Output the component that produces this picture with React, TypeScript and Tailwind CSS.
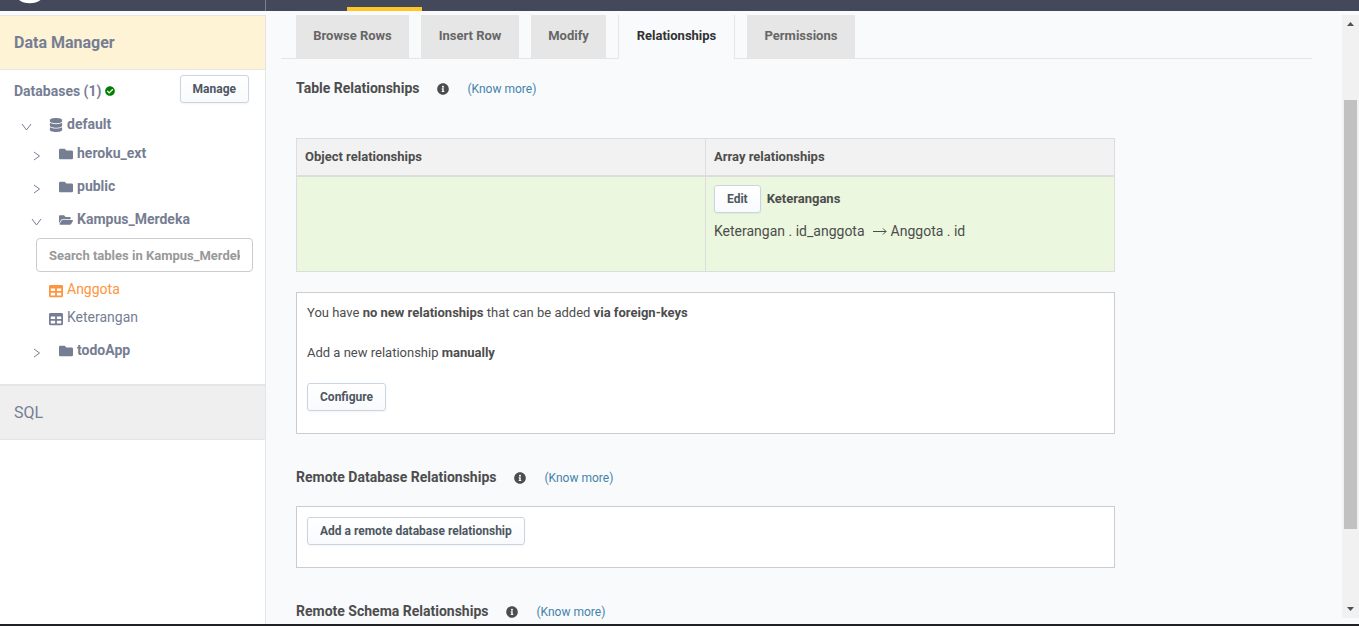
import type { ReactNode } from "react";
import {
  FaCheckCircle,
  FaDatabase,
  FaFolder,
  FaFolderOpen,
  FaInfoCircle,
  FaTable,
} from "react-icons/fa";

function ActionButton({ children }: { children: ReactNode }) {
  return (
    <button
      type="button"
      className="h-7 rounded-[3px] border border-[#cbd5e1] bg-linear-to-b from-white to-[#f8fafc] px-3 text-xs leading-5 font-bold text-[#4d5761] shadow-xs"
    >
      {children}
    </button>
  );
}

function Chevron({ open = false }: { open?: boolean }) {
  return (
    <svg
      viewBox="0 0 12 12"
      className="mt-1.5 size-3 shrink-0"
      fill="none"
      stroke="#767e93"
      strokeWidth="1"
      aria-hidden="true"
    >
      <path d={open ? "M1 3 5.500 9 10 3" : "M3 2 8.500 6 3 10"} />
    </svg>
  );
}

function Schema({ name, open = false }: { name: string; open?: boolean }) {
  const Icon = open ? FaFolderOpen : FaFolder;
  return (
    <button
      type="button"
      aria-expanded={open}
      className="flex h-[33px] w-full items-center pl-[31px] font-bold"
    >
      <Chevron open={open} />
      <Icon className="mt-0.5 mr-1 ml-4 size-3.5" />
      {name}
    </button>
  );
}

function TableLink({ name, active = false }: { name: string; active?: boolean }) {
  return (
    <a
      href="#"
      className={
        active
          ? "flex h-7 items-center pl-[49px] text-[#fd9540]"
          : "flex h-7 items-center pl-[49px]"
      }
    >
      <FaTable className="mt-1 mr-1 size-3.5" />
      {name}
    </a>
  );
}

function Sidebar() {
  return (
    <aside className="flex w-[266px] shrink-0 flex-col border-r border-[#e5e5e5] bg-white text-sm text-[#767e93]">
      <h2 className="flex h-[55px] shrink-0 items-center border-y border-[#e5e5e5] bg-[#fff3d5] px-3.5 text-base font-bold">
        Data Manager
      </h2>
      <div className="flex h-[42px] items-center justify-between pr-4 pl-3.5">
        <h3 className="flex items-center gap-1 text-sm font-bold">
          Databases (1) <FaCheckCircle className="size-2.5 text-[#008000]" />
        </h3>
        <div className="pb-1">
          <ActionButton>Manage</ActionButton>
        </div>
      </div>
      <button
        type="button"
        aria-expanded="true"
        className="flex h-6 items-center pl-[21px] font-bold"
      >
        <Chevron open />
        <FaDatabase className="mt-0.5 mr-1 ml-4 size-3.5" />
        default
      </button>
      <Schema name="heroku_ext" />
      <Schema name="public" />
      <Schema name="Kampus_Merdeka" open />
      <input
        type="text"
        aria-label="Search tables in Kampus_Merdeka"
        placeholder="Search tables in Kampus_Merdeka..."
        className="mt-[3px] mr-3 mb-[3px] ml-9 h-[34px] rounded border border-[#cccccc] px-3 text-[13px] font-bold placeholder:text-[#999999]"
      />
      <div className="pb-0.5">
        <TableLink name="Anggota" active />
        <TableLink name="Keterangan" />
      </div>
      <Schema name="todoApp" />
      <a
        href="#"
        className="mt-[18px] flex h-14 shrink-0 items-center border-t-2 border-b border-[#e5e5e5] bg-[#efefef] px-3.5 text-base"
      >
        SQL
      </a>
    </aside>
  );
}

const inactiveTab =
  "flex h-11 items-center justify-center border-b border-[#e5e5e5] bg-[#e6e6e6] pb-0.5 text-[#666666]";

function Tabs() {
  return (
    <nav className="flex h-11 shrink-0 gap-3 pl-[15px] text-[13px] font-bold shadow-[inset_0_-1px_0_#e5e5e5]">
      <a href="#" className={`${inactiveTab} w-[113px]`}>
        Browse Rows
      </a>
      <a href="#" className={`${inactiveTab} w-[98px]`}>
        Insert Row
      </a>
      <a href="#" className={`${inactiveTab} w-[75px]`}>
        Modify
      </a>
      <a
        href="#"
        aria-current="page"
        className="flex h-11 w-[117px] items-center justify-center border-x border-[#e5e5e5] bg-[#f8fafc] pb-0.5 text-[#333333]"
      >
        Relationships
      </a>
      <a href="#" className={`${inactiveTab} w-[108px]`}>
        Permissions
      </a>
    </nav>
  );
}

function SectionHeading({ title }: { title: string }) {
  return (
    <div className="flex h-6 items-center">
      <h3 className="text-sm font-bold">{title}</h3>
      <FaInfoCircle className="mt-0.5 mr-[18px] ml-[18px] size-3" />
      <a href="#" className="mt-0.5 text-xs text-[#4483ad]">
        (Know more)
      </a>
    </div>
  );
}

function RelationshipTable() {
  return (
    <table className="w-full table-fixed border-collapse border border-[#dddddd] text-left">
      <thead>
        <tr className="h-[37px] border-b-2 border-[#dddddd] bg-[#f2f2f2] text-[13px]">
          <th className="border-r border-[#dddddd] px-2 font-bold">Object relationships</th>
          <th className="px-2 font-bold">Array relationships</th>
        </tr>
      </thead>
      <tbody>
        <tr className="h-24 bg-[#ebf7de] align-top">
          <td className="border-r border-[#dddddd]" />
          <td className="p-2">
            <div className="flex items-center gap-1.5 text-[13px] font-bold">
              <ActionButton>Edit</ActionButton>
              Keterangans
            </div>
            <div className="mt-2 flex items-center text-sm">
              Keterangan . id_anggota
              <svg
                viewBox="0 0 14 8"
                className="mr-1 ml-2 h-2 w-3.5"
                fill="none"
                stroke="currentColor"
                aria-hidden="true"
              >
                <path d="M0 4.500h13M10 1.500l3 3-3 3" />
              </svg>
              Anggota . id
            </div>
          </td>
        </tr>
      </tbody>
    </table>
  );
}

function Scrollbar() {
  return (
    <div className="mb-1.5 flex w-[17px] shrink-0 flex-col items-center bg-[#f1f1f1]" aria-hidden="true">
      <svg viewBox="0 0 17 17" className="size-[17px] shrink-0" fill="#505050">
        <path d="M5 11h7L8.500 7z" />
      </svg>
      <div className="grow-[68]" />
      <div className="w-[13px] grow-[429] bg-[#c1c1c1]" />
      <div className="grow-[72]" />
      <svg viewBox="0 0 17 17" className="size-[17px] shrink-0" fill="#505050">
        <path d="M5 6h7l-3.500 4z" />
      </svg>
    </div>
  );
}

export default function App() {
  return (
    <div className="flex h-screen flex-col overflow-hidden border-b-2 border-[#202124] bg-[#f8fafc] font-[Roboto,sans-serif] text-[13px] leading-5 text-[#4d4d4d]">
      <header className="flex h-[11px] shrink-0 bg-[#43495a]">
        <div className="w-[266px] shrink-0 border-r border-[#788094]">
          <svg viewBox="0 0 40 11" className="ml-2.5 h-[11px] w-10" fill="white" aria-hidden="true">
            <path d="M9 0h21.500Q26 3.200 19.700 3.200T9 0" />
          </svg>
        </div>
        <div className="ml-[81px] w-[75px] border-b-4 border-[#ffc627]" />
      </header>
      <div className="mt-1 flex min-h-0 grow">
        <Sidebar />
        <main className="min-w-0 grow overflow-hidden pr-[30px] pl-[15px]">
          <Tabs />
          <div className="max-w-[834px] pl-[15px]">
            <div className="pt-[17px] pb-[38px]">
              <SectionHeading title="Table Relationships" />
            </div>
            <RelationshipTable />
            <section className="mt-5 h-[142px] border border-[#cccccc] bg-white px-2.5 pt-2.5 text-[13px]">
              <p>
                You have <b>no new relationships</b> that can be added <b>via foreign-keys</b>
              </p>
              <p className="my-5">
                Add a new relationship <b>manually</b>
              </p>
              <ActionButton>Configure</ActionButton>
            </section>
            <div className="pt-[31px] pb-[17px]">
              <SectionHeading title="Remote Database Relationships" />
            </div>
            <section className="h-[62px] border border-[#cccccc] bg-white p-2.5">
              <ActionButton>Add a remote database relationship</ActionButton>
            </section>
            <div className="pt-[31px]">
              <SectionHeading title="Remote Schema Relationships" />
            </div>
          </div>
        </main>
        <Scrollbar />
      </div>
    </div>
  );
}
